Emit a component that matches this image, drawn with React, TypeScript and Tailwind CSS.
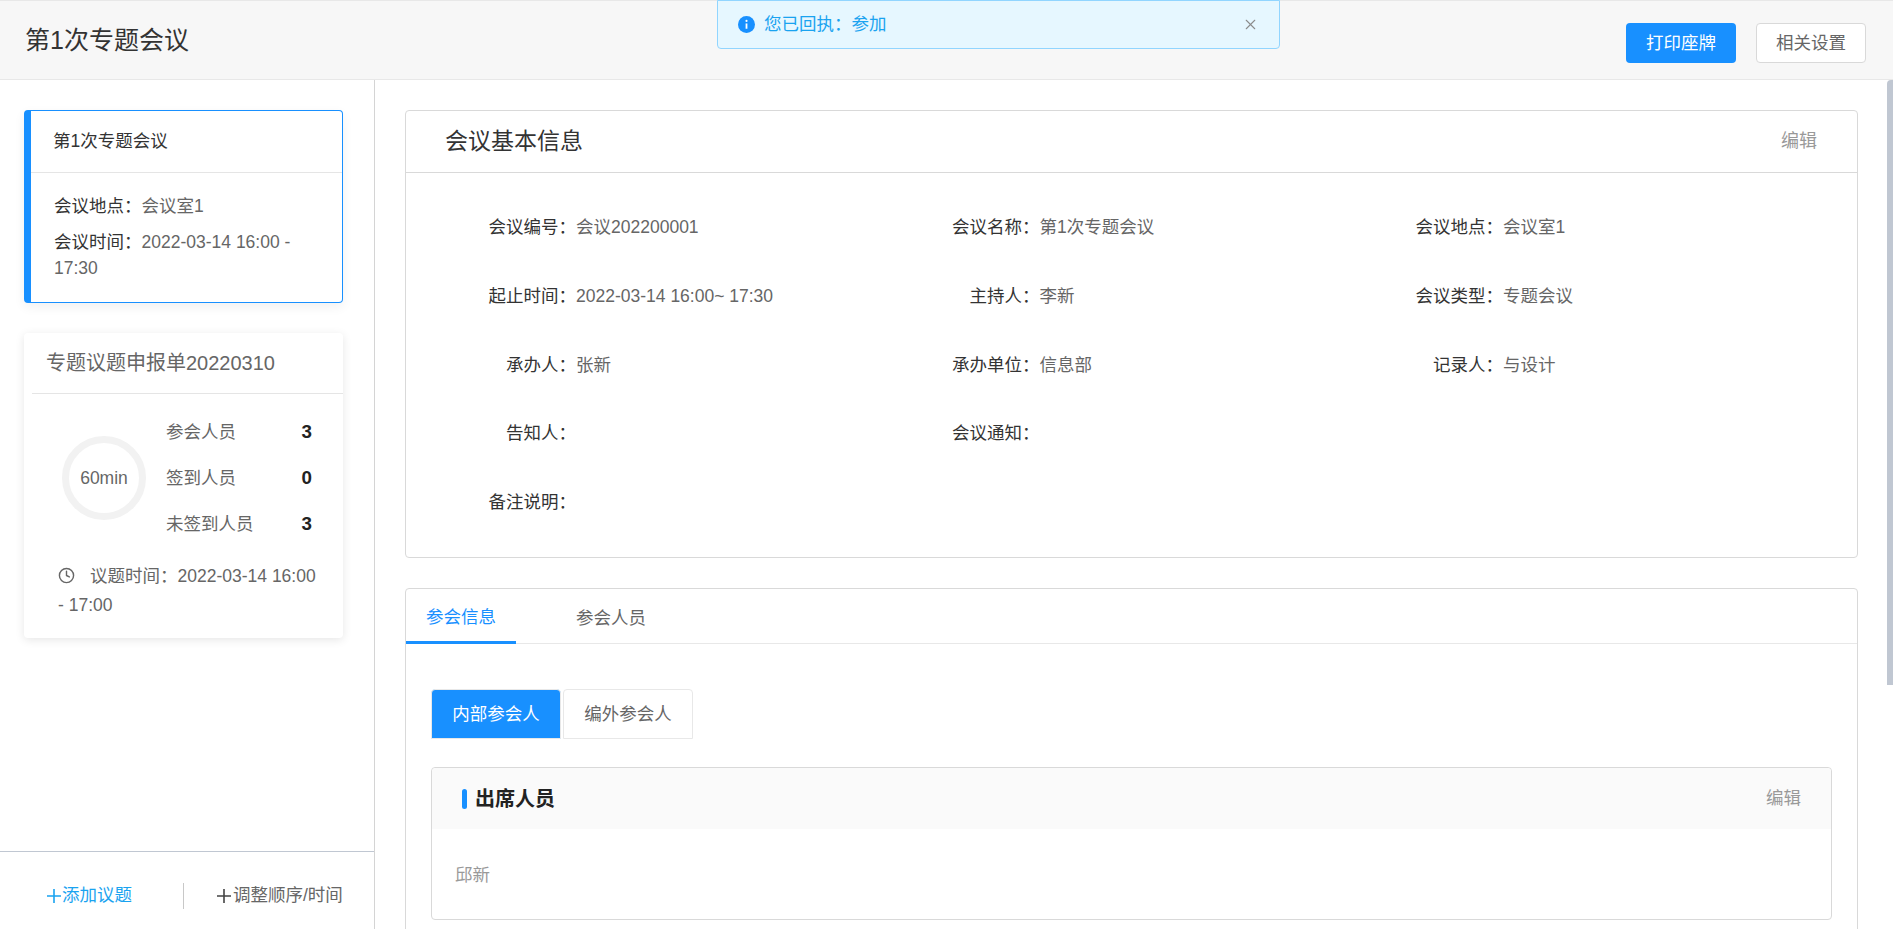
import { Clock, X } from "lucide-react";

const fields = [
  { label: "会议编号", value: "会议202200001" },
  { label: "会议名称", value: "第1次专题会议" },
  { label: "会议地点", value: "会议室1" },
  { label: "起止时间", value: "2022-03-14 16:00~ 17:30" },
  { label: "主持人", value: "李新" },
  { label: "会议类型", value: "专题会议" },
  { label: "承办人", value: "张新" },
  { label: "承办单位", value: "信息部" },
  { label: "记录人", value: "与设计" },
  { label: "告知人", value: "" },
  { label: "会议通知", value: "" },
  { label: "", value: "" },
  { label: "备注说明", value: "" },
];

const stats = [
  { label: "参会人员", value: 3 },
  { label: "签到人员", value: 0 },
  { label: "未签到人员", value: 3 },
];

function PlusMark({ className }: { className: string }) {
  return (
    <svg viewBox="0 0 14 14" className={className} fill="none" stroke="currentColor" strokeWidth="1.6">
      <path d="M0 7h14M7 0v14" />
    </svg>
  );
}

function InfoMark() {
  return (
    <svg viewBox="0 0 16 16" className="mr-[9px] h-[17px] w-[17px] shrink-0">
      <circle cx="8" cy="8" r="8" fill="#1890ff" />
      <circle cx="8" cy="4.6" r="1" fill="#fff" />
      <path d="M8 7v5" stroke="#fff" strokeWidth="1.7" />
    </svg>
  );
}

export default function App() {
  return (
    <div className="relative flex h-[929px] flex-col overflow-hidden bg-white font-['Liberation_Sans','Noto_Sans_CJK_SC',sans-serif] text-[#333]">
      <header className="flex h-[80px] shrink-0 items-center justify-between border-y border-[#e8e8e8] bg-[#f7f7f7] pr-[27px] pl-[25px]">
        <h1 className="mt-[2px] text-[25px] font-normal text-[#333]">第1次专题会议</h1>
        <div className="mt-[6px] flex gap-5">
          <button type="button" className="h-10 w-[110px] rounded bg-[#1890ff] text-[17.5px] text-white">
            打印座牌
          </button>
          <button type="button" className="h-10 w-[110px] rounded border border-[#d9d9d9] bg-white text-[17.5px] text-[#666]">
            相关设置
          </button>
        </div>
      </header>

      <div className="absolute top-0 left-[717px] flex h-[49px] w-[563px] items-center rounded-b border border-[#91d5ff] bg-[#e6f7ff] pr-[20px] pl-[20px] text-[17.5px] text-[#1aa3f0]">
        <InfoMark />
        <span className="flex-1">您已回执：参加</span>
        <X size={17} strokeWidth={1.5} className="text-[#8c8c8c]" />
      </div>

      <div className="flex min-h-0 flex-1">
        <aside className="flex w-[375px] shrink-0 flex-col border-r border-[#d4d4d4]">
          <div className="flex-1 px-[24px] pt-[30px]">
            <section className="h-[193px] w-[319px] rounded border border-l-[7px] border-[#1890ff] bg-white shadow-[0_4px_12px_rgba(0,0,0,0.06)]">
              <h2 className="flex h-[62px] items-center border-b border-[#e5e5e5] pl-[22px] text-[17.5px] font-normal">
                第1次专题会议
              </h2>
              <div className="px-[23px] pt-[20px] text-[17.5px] leading-[26px]">
                <p>
                  会议地点：<span className="text-[#666]">会议室1</span>
                </p>
                <p className="mt-[10px]">
                  会议时间：<span className="text-[#666]">2022-03-14 16:00 - 17:30</span>
                </p>
              </div>
            </section>

            <section className="mt-[30px] h-[305px] w-[319px] rounded bg-white pl-[8px] shadow-[0_2px_10px_rgba(0,0,0,0.1)]">
              <h2 className="flex h-[61px] items-center border-b border-[#e5e5e5] pl-[14px] text-[20px] font-normal text-[#666]">
                专题议题申报单20220310
              </h2>
              <div className="flex items-center pt-[15px] pl-[30px]">
                <div className="flex h-[84px] w-[84px] shrink-0 items-center justify-center rounded-full border-[7px] border-[#f2f2f2] text-[17.5px] text-[#666]">
                  60min
                </div>
                <div className="ml-[20px] w-[146px]">
                  {stats.map((stat) => (
                    <div key={stat.label} className="flex h-[46px] items-center justify-between text-[17.5px] text-[#666]">
                      <span>{stat.label}</span>
                      <span className="text-[18.75px] font-bold text-[#222]">{stat.value}</span>
                    </div>
                  ))}
                </div>
              </div>
              <p className="mt-[15px] pr-[20px] pl-[26px] text-[17.5px] leading-[29px] text-[#666]">
                <Clock size={17} className="mr-[15px] inline-block align-[-2px]" />
                议题时间：2022-03-14 16:00 - 17:00
              </p>
            </section>
          </div>

          <div className="flex h-[78px] shrink-0 items-center border-t border-[#c0c7d2] pt-[10px] text-[17.5px]">
            <button type="button" className="ml-[47px] flex w-[136px] items-center text-[#1aa3f0]">
              <PlusMark className="mr-[1px] h-[14px] w-[14px]" />
              添加议题
            </button>
            <span className="h-[26px] w-px bg-[#c8c8c8]" />
            <button type="button" className="ml-[33px] flex items-center text-[#666]">
              <PlusMark className="mr-[2px] h-[14px] w-[14px] text-[#444]" />
              调整顺序/时间
            </button>
          </div>
        </aside>

        <main className="min-w-0 flex-1 overflow-hidden pt-[30px] pr-[35px] pl-[30px]">
          <section className="h-[448px] rounded border border-[#d9d9d9]">
            <div className="flex h-[62px] items-center justify-between border-b border-[#d9d9d9] pr-[40px] pl-[39px]">
              <h2 className="text-[23px] font-normal">会议基本信息</h2>
              <button type="button" className="text-[18px] text-[#999]">编辑</button>
            </div>
            <div className="grid grid-cols-[repeat(3,463.5px)] pt-[20px] pl-[31px] text-[17.5px]">
              {fields.map((field, i) => (
                <div key={i} className="flex h-[68.7px] items-center">
                  {field.label && (
                    <>
                      <span className="w-[139px] text-right">{field.label}：</span>
                      <span className="text-[#666]">{field.value}</span>
                    </>
                  )}
                </div>
              ))}
            </div>
          </section>

          <section className="mt-[30px] rounded border border-[#d9d9d9] pb-[40px]">
            <div className="flex h-[55px] border-b border-[#e8e8e8] text-[17.5px]">
              <button type="button" className="-mb-px h-[55px] w-[110px] border-b-[3px] border-[#1890ff] pt-[4px] text-[#1890ff]">
                参会信息
              </button>
              <button type="button" className="ml-[40px] h-[55px] w-[110px] pt-[3px] text-[#666]">
                参会人员
              </button>
            </div>
            <div className="px-[25px] pt-[45px]">
              <div className="flex gap-[2px] text-[17.5px]">
                <button type="button" className="h-[50px] w-[130px] rounded-t border border-[#e8e8e8] bg-[#1890ff] text-white">
                  内部参会人
                </button>
                <button type="button" className="h-[50px] w-[130px] rounded-t border border-[#e8e8e8] text-[#666]">
                  编外参会人
                </button>
              </div>
              <div className="mt-[28px] h-[153px] rounded border border-[#d9d9d9]">
                <div className="flex h-[61px] items-center justify-between rounded-t bg-[#fafafa] pr-[30px] pl-[30px]">
                  <h3 className="flex items-center pt-[1px] text-[20px] font-bold text-[#222]">
                    <span className="mr-[8px] h-5 w-[5px] rounded-full bg-[#1890ff]" />
                    出席人员
                  </h3>
                  <button type="button" className="text-[17.5px] text-[#999]">编辑</button>
                </div>
                <p className="pt-[33px] pl-[23px] text-[17.5px] text-[#999]">邱新</p>
              </div>
            </div>
          </section>
        </main>
      </div>

      <div className="absolute top-[80px] right-0 h-[605px] w-[6px] rounded-tl bg-[#c0c7d2]" />
    </div>
  );
}
